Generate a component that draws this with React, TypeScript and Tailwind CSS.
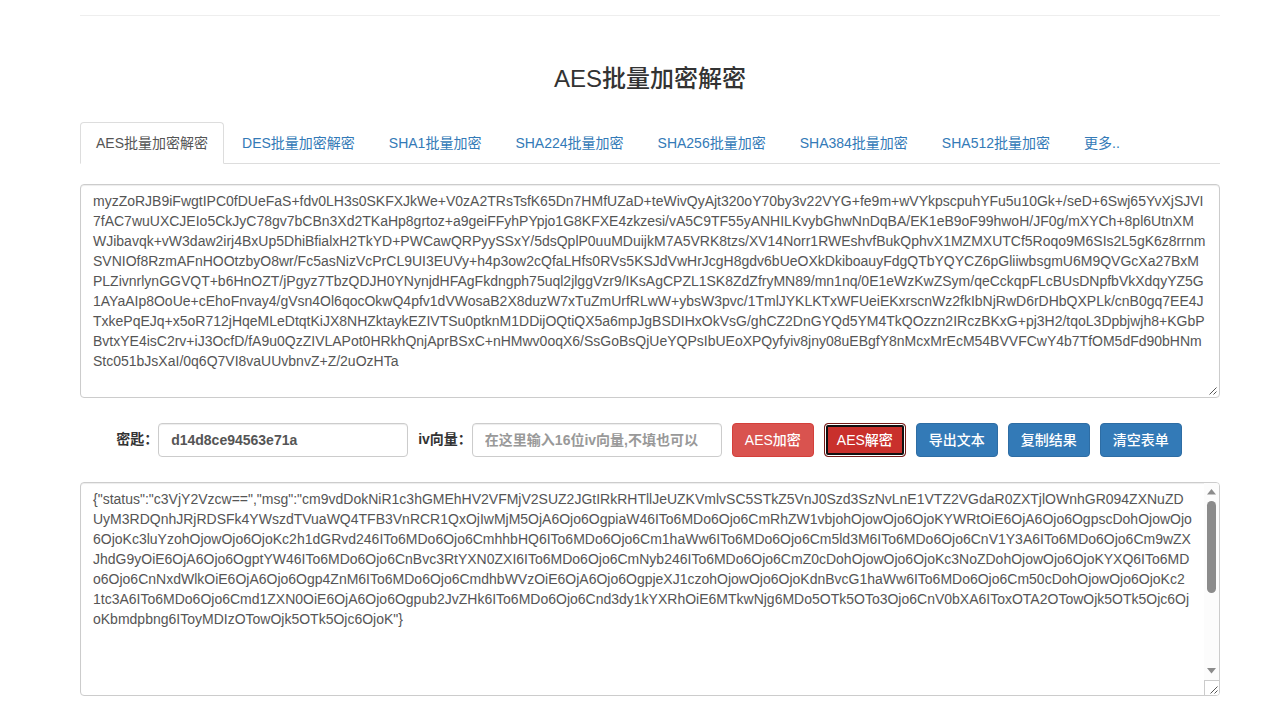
import { useState } from 'react';
import type { ButtonHTMLAttributes } from 'react';
import clsx from 'clsx';

const tabs = [
  'AES批量加密解密',
  'DES批量加密解密',
  'SHA1批量加密',
  'SHA224批量加密',
  'SHA256批量加密',
  'SHA384批量加密',
  'SHA512批量加密',
  '更多..',
];

const cipherText = [
  'myzZoRJB9iFwgtIPC0fDUeFaS+fdv0LH3s0SKFXJkWe+V0zA2TRsTsfK65Dn7HMfUZaD+teWivQyAjt320oY70by3v22VYG+fe9m+wVYkpscpuhYFu5u10Gk+/seD+6Swj65YvXjSJVI',
  '7fAC7wuUXCJEIo5CkJyC78gv7bCBn3Xd2TKaHp8grtoz+a9geiFFyhPYpjo1G8KFXE4zkzesi/vA5C9TF55yANHILKvybGhwNnDqBA/EK1eB9oF99hwoH/JF0g/mXYCh+8pl6UtnXM',
  'WJibavqk+vW3daw2irj4BxUp5DhiBfialxH2TkYD+PWCawQRPyySSxY/5dsQplP0uuMDuijkM7A5VRK8tzs/XV14Norr1RWEshvfBukQphvX1MZMXUTCf5Roqo9M6SIs2L5gK6z8rrnm',
  'SVNIOf8RzmAFnHOOtzbyO8wr/Fc5asNizVcPrCL9UI3EUVy+h4p3ow2cQfaLHfs0RVs5KSJdVwHrJcgH8gdv6bUeOXkDkiboauyFdgQTbYQYCZ6pGliiwbsgmU6M9QVGcXa27BxM',
  'PLZivnrlynGGVQT+b6HnOZT/jPgyz7TbzQDJH0YNynjdHFAgFkdngph75uql2jlggVzr9/IKsAgCPZL1SK8ZdZfryMN89/mn1nq/0E1eWzKwZSym/qeCckqpFLcBUsDNpfbVkXdqyYZ5G',
  '1AYaAIp8OoUe+cEhoFnvay4/gVsn4Ol6qocOkwQ4pfv1dVWosaB2X8duzW7xTuZmUrfRLwW+ybsW3pvc/1TmlJYKLKTxWFUeiEKxrscnWz2fkIbNjRwD6rDHbQXPLk/cnB0gq7EE4J',
  'TxkePqEJq+x5oR712jHqeMLeDtqtKiJX8NHZktaykEZIVTSu0ptknM1DDijOQtiQX5a6mpJgBSDIHxOkVsG/ghCZ2DnGYQd5YM4TkQOzzn2IRczBKxG+pj3H2/tqoL3Dpbjwjh8+KGbP',
  'BvtxYE4isC2rv+iJ3OcfD/fA9u0QzZIVLAPot0HRkhQnjAprBSxC+nHMwv0oqX6/SsGoBsQjUeYQPsIbUEoXPQyfyiv8jny08uEBgfY8nMcxMrEcM54BVVFCwY4b7TfOM5dFd90bHNm',
  'Stc051bJsXaI/0q6Q7VI8vaUUvbnvZ+Z/2uOzHTa',
].join('\n');

const plainText = [
  '{"status":"c3VjY2Vzcw==","msg":"cm9vdDokNiR1c3hGMEhHV2VFMjV2SUZ2JGtIRkRHTllJeUZKVmlvSC5STkZ5VnJ0Szd3SzNvLnE1VTZ2VGdaR0ZXTjlOWnhGR094ZXNuZD',
  'UyM3RDQnhJRjRDSFk4YWszdTVuaWQ4TFB3VnRCR1QxOjIwMjM5OjA6Ojo6OgpiaW46ITo6MDo6Ojo6CmRhZW1vbjohOjowOjo6OjoKYWRtOiE6OjA6Ojo6OgpscDohOjowOjo',
  '6OjoKc3luYzohOjowOjo6OjoKc2h1dGRvd246ITo6MDo6Ojo6CmhhbHQ6ITo6MDo6Ojo6Cm1haWw6ITo6MDo6Ojo6Cm5ld3M6ITo6MDo6Ojo6CnV1Y3A6ITo6MDo6Ojo6Cm9wZX',
  'JhdG9yOiE6OjA6Ojo6OgptYW46ITo6MDo6Ojo6CnBvc3RtYXN0ZXI6ITo6MDo6Ojo6CmNyb246ITo6MDo6Ojo6CmZ0cDohOjowOjo6OjoKc3NoZDohOjowOjo6OjoKYXQ6ITo6MD',
  'o6Ojo6CnNxdWlkOiE6OjA6Ojo6Ogp4ZnM6ITo6MDo6Ojo6CmdhbWVzOiE6OjA6Ojo6OgpjeXJ1czohOjowOjo6OjoKdnBvcG1haWw6ITo6MDo6Ojo6Cm50cDohOjowOjo6OjoKc2',
  '1tc3A6ITo6MDo6Ojo6Cmd1ZXN0OiE6OjA6Ojo6Ogpub2JvZHk6ITo6MDo6Ojo6Cnd3dy1kYXRhOiE6MTkwNjg6MDo5OTk5OTo3Ojo6CnV0bXA6IToxOTA2OTowOjk5OTk5Ojc6Oj',
  'oKbmdpbng6IToyMDIzOTowOjk5OTk5Ojc6OjoK"}',
].join('\n');

const fieldClass =
  'h-[34px] w-[250px] rounded border border-[#ccc] bg-white px-3 font-bold text-[#555] shadow-[inset_0_1px_1px_rgba(0,0,0,0.075)] outline-none placeholder:text-[#999]';

type ActionButtonProps = ButtonHTMLAttributes<HTMLButtonElement> & {
  tone: 'danger' | 'pressed' | 'primary';
};

function ActionButton({ tone, children, ...rest }: ActionButtonProps) {
  return (
    <button
      type="button"
      className={clsx(
        'h-[34px] w-[82px] rounded border text-center font-medium whitespace-nowrap text-white',
        tone === 'danger' && 'border-[#d43f3a] bg-[#d9534f]',
        tone === 'pressed' &&
          'border-[#761c19] bg-[#c9302c] shadow-[inset_0_0_0_1px_#fff,inset_0_0_0_3px_#101010]',
        tone === 'primary' && 'border-[#2e6da4] bg-[#337ab7]',
      )}
      {...rest}
    >
      {children}
    </button>
  );
}

function ResizeGrip() {
  return (
    <svg aria-hidden="true" width="15" height="15" viewBox="0 0 15 15" stroke="#555" strokeWidth="1">
      <path d="M5.5 12.5L12.5 5.5M9.5 12.5L12.5 9.5" />
    </svg>
  );
}

function ScrollRail() {
  return (
    <div aria-hidden="true" className="flex w-[15px] shrink-0 flex-col bg-[#fcfcfc]">
      <div className="flex flex-1 flex-col items-center pt-0.5">
        <svg className="mt-1" width="9" height="6" viewBox="0 0 9 6" fill="#8b8b8b">
          <path d="M4.5 0L9 5.5H0Z" />
        </svg>
        <div className="mt-1.5 h-[92px] w-[9px] rounded-full bg-[#8b8b8b]" />
        <svg className="mt-auto mb-1.5" width="9" height="6" viewBox="0 0 9 6" fill="#8b8b8b">
          <path d="M0 0H9L4.5 5.5Z" />
        </svg>
      </div>
      <div className="size-[15px] border-t border-l border-[#ccc] bg-white">
        <ResizeGrip />
      </div>
    </div>
  );
}

export default function App() {
  const [source, setSource] = useState(cipherText);
  const [result, setResult] = useState(plainText);
  const [secret, setSecret] = useState('d14d8ce94563e71a');
  const [iv, setIv] = useState('');

  return (
    <div className="min-h-screen bg-white pt-[15px] pr-[61px] pb-7 pl-20 font-['Liberation_Sans','Noto_Sans_CJK_SC',sans-serif] text-sm leading-5 text-[#333]">
      <hr className="border-t border-[#eee]" />

      <h1 className="mt-[49px] text-center text-2xl leading-7 font-medium">AES批量加密解密</h1>

      <nav className="mt-[29px] flex gap-0.5 border-b border-[#ddd]">
        {tabs.map((tab, index) => (
          <a
            key={tab}
            href="#"
            aria-current={index === 0 ? 'page' : undefined}
            className={clsx(
              '-mb-px rounded-t border px-[15px] py-2.5 whitespace-nowrap',
              index === 0 ? 'border-[#ddd] border-b-white bg-white text-[#555]' : 'border-transparent text-[#337ab7]',
            )}
          >
            {tab}
          </a>
        ))}
      </nav>

      <main>
        <div className="relative mt-5 rounded border border-[#ccc] shadow-[inset_0_1px_1px_rgba(0,0,0,0.075)]">
          <textarea
            aria-label="待处理文本"
            rows={10}
            spellCheck={false}
            value={source}
            onChange={(event) => setSource(event.target.value)}
            className="block w-full resize-none overflow-hidden px-3 py-1.5 whitespace-pre text-[#555] outline-none"
          />
          <div className="absolute right-0 bottom-0">
            <ResizeGrip />
          </div>
        </div>

        <form className="mt-[25px] flex flex-wrap items-center justify-center gap-2.5 pr-0.5">
          <div className="flex items-center">
            <label htmlFor="secret" className="pb-0.5 font-bold">
              密匙：
            </label>
            <input
              id="secret"
              type="text"
              value={secret}
              onChange={(event) => setSecret(event.target.value)}
              className={fieldClass}
            />
          </div>
          <div className="flex items-center">
            <label htmlFor="iv" className="pb-0.5 font-bold">
              iv向量：
            </label>
            <input
              id="iv"
              type="text"
              placeholder="在这里输入16位iv向量,不填也可以"
              value={iv}
              onChange={(event) => setIv(event.target.value)}
              className={fieldClass}
            />
          </div>
          <ActionButton tone="danger">AES加密</ActionButton>
          <ActionButton tone="pressed">AES解密</ActionButton>
          <ActionButton tone="primary">导出文本</ActionButton>
          <ActionButton tone="primary">复制结果</ActionButton>
          <ActionButton tone="primary">清空表单</ActionButton>
        </form>

        <div className="mt-[25px] flex overflow-hidden rounded border border-[#ccc] shadow-[inset_0_1px_1px_rgba(0,0,0,0.075)]">
          <textarea
            aria-label="处理结果"
            rows={10}
            spellCheck={false}
            value={result}
            onChange={(event) => setResult(event.target.value)}
            className="block min-w-0 flex-1 resize-none overflow-hidden py-1.5 pl-3 whitespace-pre text-[#555] outline-none"
          />
          <ScrollRail />
        </div>
      </main>
    </div>
  );
}
